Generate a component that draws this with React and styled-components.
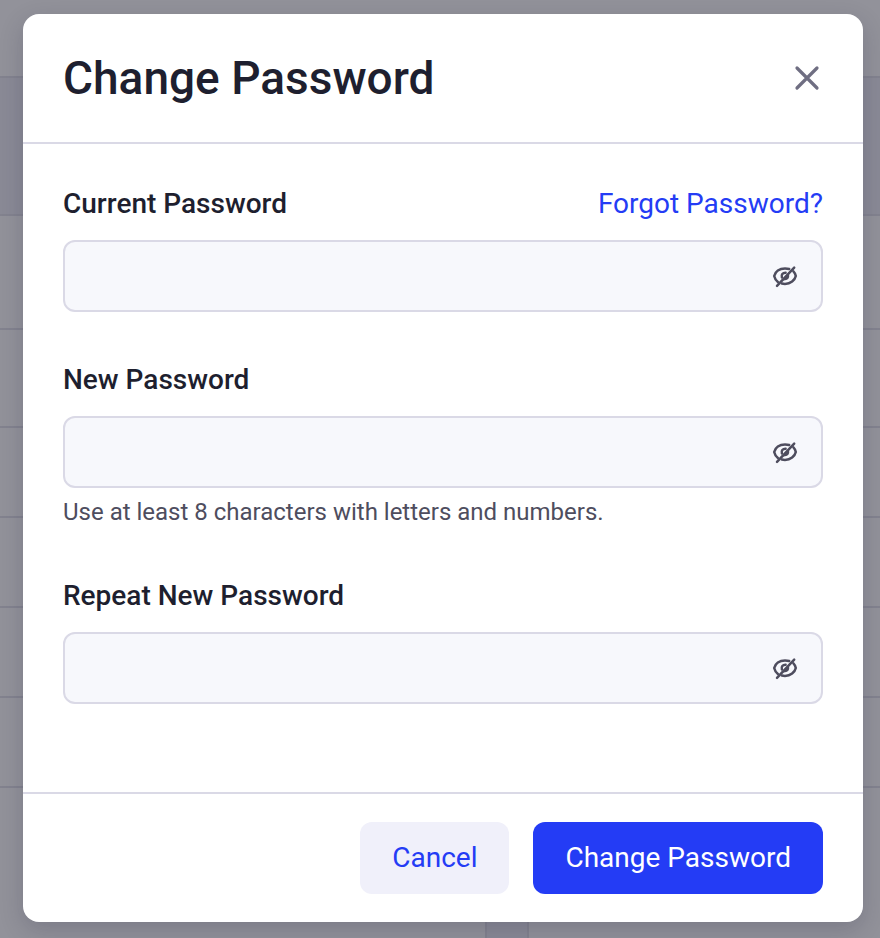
import React from 'react';
import styled, { createGlobalStyle } from 'styled-components';

const GlobalStyle = createGlobalStyle`
  * {
    box-sizing: border-box;
  }
  body {
    margin: 0;
    background: #92929a;
    color: #1e1f2f;
    font-family: Roboto, sans-serif;
    font-size: 28px;
    line-height: 40px;
  }
  button, input {
    font: inherit;
  }
`;

const Page = styled.div`
  position: relative;
  min-height: 100vh;
  display: flex;
  flex-direction: column;
  overflow: hidden;
`;
const BackRow = styled.div`
  height: ${props => props.$height}px;
  flex-shrink: 0;
  border-bottom: 2px solid #83838f;
  background: ${props => (props.$shaded ? '#8a8a96' : 'transparent')};
`;
const BackFooter = styled.div`
  flex-grow: 1;
  display: flex;
  justify-content: center;
  padding-left: 134px;
`;
const BackCell = styled.div`
  width: 44px;
  border: 2px solid #83838f;
  border-width: 0 2px;
  background: #8a8a96;
`;

const Overlay = styled.div`
  position: absolute;
  inset: 0;
  padding: 14px 17px 16px 23px;
`;
const Dialog = styled.form`
  background: #ffffff;
  border-radius: 16px;
  box-shadow: 0 8px 24px rgba(30, 31, 60, 0.2);
`;
const Header = styled.header`
  display: flex;
  align-items: center;
  justify-content: space-between;
  padding: 32px 40px;
  border-bottom: 2px solid #dad9e6;
`;
const Title = styled.h1`
  margin: 0;
  font-size: 46px;
  font-weight: 500;
  line-height: 64px;
`;
const IconButton = styled.button`
  display: flex;
  padding: 0;
  border: 0;
  background: none;
  color: ${props => props.$color};
  cursor: pointer;
`;
const Body = styled.div`
  display: flex;
  flex-direction: column;
  gap: 48px;
  padding: 40px 40px 88px;
`;
const LabelRow = styled.div`
  display: flex;
  justify-content: space-between;
  margin-bottom: 16px;
`;
const Label = styled.label`
  font-weight: 500;
`;
const Link = styled.a`
  color: #243cf5;
  text-decoration: none;
`;
const InputBox = styled.div`
  display: flex;
  align-items: center;
  height: 72px;
  padding: 0 20px 0 0;
  border: 2px solid #dad9e6;
  border-radius: 12px;
  background: #f7f8fc;
`;
const Input = styled.input`
  flex: 1;
  min-width: 0;
  height: 100%;
  padding: 0 24px;
  border: 0;
  outline: 0;
  background: none;
  color: inherit;
`;
const Hint = styled.p`
  margin: 8px 0 0;
  color: #4e4d5e;
  font-size: 24px;
  line-height: 32px;
`;
const Footer = styled.footer`
  display: flex;
  justify-content: flex-end;
  gap: 24px;
  padding: 28px 40px;
  border-top: 2px solid #dad9e6;
`;
const Button = styled.button`
  height: 72px;
  padding: 0 32px;
  border: 0;
  border-radius: 12px;
  background: ${props => (props.$primary ? '#243cf5' : '#f0f0fa')};
  color: ${props => (props.$primary ? '#ffffff' : '#243cf5')};
  cursor: pointer;
`;

const CloseIcon = () => (
    <svg width="32" height="32" viewBox="0 0 32 32" fill="none" stroke="currentColor" strokeWidth="3.2" strokeLinecap="round">
        <path d="M6 6L26 26M26 6L6 26" />
    </svg>
);

const EyeOffIcon = () => (
    <svg width="32" height="32" viewBox="0 0 32 32" fill="none" stroke="currentColor" strokeWidth="2.5" strokeLinecap="round">
        <path d="M20.2 9C18.9 8.6 17.5 8.4 16 8.4C10.4 8.4 6.2 11.6 5.2 16C5.7 18.4 7 20.4 8.9 21.9" />
        <path d="M24.4 11.4C25.6 12.6 26.4 14.2 26.8 16C25.8 20.4 21.6 23.9 16 23.9C14.9 23.9 13.9 23.8 12.9 23.5" />
        <path d="M12.9 17.4C12 14.7 13.7 12.6 16.6 12.7" />
        <path d="M19.4 15.4C19.8 17.5 18.4 19.2 16 19.5Z" fill="currentColor" strokeWidth="1.6" />
        <path d="M8 25.8L25.2 7.6" />
    </svg>
);

const rows = [
    { height: 78 },
    { height: 138, shaded: true },
    { height: 114 },
    { height: 98 },
    { height: 90 },
    { height: 90 },
    { height: 90 },
    { height: 90 },
];

class PasswordField extends React.Component {
    state = { visible: false };

    toggle = () => this.setState({ visible: !this.state.visible });

    render() {
        const { id, label, hint, autoComplete, children } = this.props;
        return (
            <div>
                <LabelRow>
                    <Label htmlFor={id}>{label}</Label>
                    {children}
                </LabelRow>
                <InputBox>
                    <Input
                        id={id}
                        type={this.state.visible ? 'text' : 'password'}
                        autoComplete={autoComplete}
                        aria-describedby={hint ? id + '-hint' : undefined}
                    />
                    <IconButton type="button" $color="#4e4d5e" aria-label="Show password" onClick={this.toggle}>
                        <EyeOffIcon />
                    </IconButton>
                </InputBox>
                {hint && <Hint id={id + '-hint'}>{hint}</Hint>}
            </div>
        );
    }
}

export default class App extends React.Component {
    render() {
        return (
            <Page>
                <GlobalStyle />
                {rows.map((row, index) => (
                    <BackRow key={index} $height={row.height} $shaded={row.shaded} />
                ))}
                <BackFooter>
                    <BackCell />
                </BackFooter>
                <Overlay>
                    <Dialog role="dialog" aria-labelledby="title" onSubmit={e => e.preventDefault()}>
                        <Header>
                            <Title id="title">Change Password</Title>
                            <IconButton type="button" $color="#6f6e82" aria-label="Close">
                                <CloseIcon />
                            </IconButton>
                        </Header>
                        <Body>
                            <PasswordField id="current" label="Current Password" autoComplete="current-password">
                                <Link href="#forgot">Forgot Password?</Link>
                            </PasswordField>
                            <PasswordField
                                id="new"
                                label="New Password"
                                autoComplete="new-password"
                                hint="Use at least 8 characters with letters and numbers."
                            />
                            <PasswordField id="repeat" label="Repeat New Password" autoComplete="new-password" />
                        </Body>
                        <Footer>
                            <Button type="button">Cancel</Button>
                            <Button type="submit" $primary>Change Password</Button>
                        </Footer>
                    </Dialog>
                </Overlay>
            </Page>
        );
    }
}
